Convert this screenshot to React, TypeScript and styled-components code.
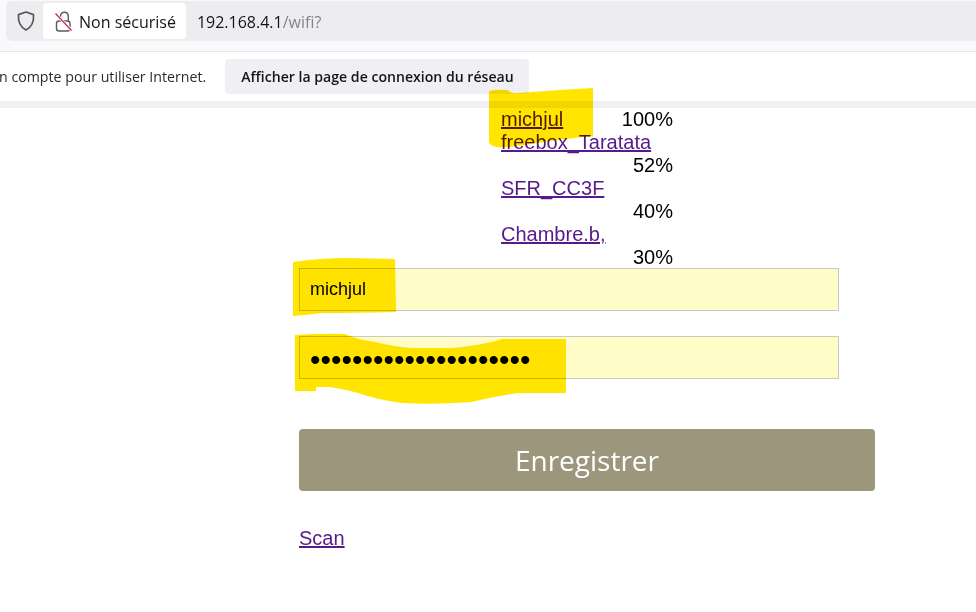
import React from "react";
import styled, { createGlobalStyle } from "styled-components";

const GlobalStyle = createGlobalStyle`
  html, body {
    margin: 0;
    padding: 0;
    height: 100%;
    overflow: hidden;
    background: #fff;
  }
`;

const Shell = styled.div`
  position: relative;
  width: 976px;
  height: 612px;
  overflow: hidden;
  background: #fff;
`;

const Toolbar = styled.div`
  box-sizing: border-box;
  height: 52px;
  padding: 1px 0 0 6px;
  background: #f9f9fb;
  border-bottom: 1px solid #e4e4e8;
`;

const UrlBar = styled.div`
  display: flex;
  align-items: center;
  height: 40px;
  padding-left: 10px;
  background: #ededf0;
  border-radius: 6px 0 0 6px;
  font-family: "Open Sans", "Noto Sans", sans-serif;
  font-size: 16px;
  color: #15141a;
`;

const ShieldIcon = styled.svg`
  width: 20px;
  height: 22px;
  flex: none;
`;

const SecurityChip = styled.div`
  display: flex;
  align-items: center;
  gap: 6px;
  height: 36px;
  margin-left: 7px;
  padding: 0 10px 0 10px;
  background: #fff;
  border-radius: 4px;
`;

const LockIcon = styled.svg`
  width: 20px;
  height: 22px;
  flex: none;
`;

const ChipLabel = styled.span`
  margin-top: 2px;
`;

const UrlText = styled.div`
  margin: 2px 0 0 11px;
`;

const UrlPath = styled.span`
  color: #85858c;
`;

const NoticeBar = styled.div`
  display: flex;
  align-items: center;
  box-sizing: border-box;
  height: 56px;
  padding-bottom: 1px;
  background: #fff;
  border-bottom: 7px solid #f0f0f3;
  font-family: "Open Sans", "Noto Sans", sans-serif;
  font-size: 14.2px;
  color: #2b2a33;
  white-space: nowrap;
`;

const NoticeText = styled.span`
  margin-left: -1px;
`;

const NoticeButton = styled.div`
  display: flex;
  align-items: center;
  height: 35px;
  margin-left: 19px;
  padding: 0 15px 0 16px;
  background: #f0f0f4;
  border-radius: 4px;
  font-size: 14.1px;
  font-weight: 600;
  color: #15141a;
`;

const Page = styled.main`
  width: 576px;
  margin-left: 299px;
  font-family: "Liberation Sans", Arial, sans-serif;
  font-size: 20px;
  line-height: 23px;
  color: #000;
`;

const NetworkList = styled.div`
  width: 172px;
  margin-left: 202px;
`;

const NetworkRow = styled.div``;

const NetworkLink = styled.a`
  color: #551a8b;
  text-decoration: underline;
`;

const Quality = styled.span`
  float: right;
  width: 64px;
  text-align: right;

  /* le dernier flottant pousse le formulaire */
  ${NetworkRow}:last-child & {
    margin-bottom: -1px;
  }
`;

const Field = styled.input`
  display: block;
  box-sizing: border-box;
  width: 540px;
  height: 43px;
  margin: 0 0 25px;
  padding: 0 10px;
  background: #fffcc8;
  border: 1px solid #c9c9c4;
  border-radius: 0;
  outline: none;
  font-family: "Liberation Sans", Arial, sans-serif;
  font-size: 18px;
  color: #000;

  &[type="password"] {
    padding-top: 4px;
    font-size: 30px;
    letter-spacing: 0;
  }
`;

const SaveButton = styled.button`
  display: block;
  width: 576px;
  height: 62px;
  margin-top: 50px;
  padding: 0;
  background: #9c967c;
  border: none;
  border-radius: 4px;
  font-family: "Open Sans", "Noto Sans", sans-serif;
  font-size: 28px;
  color: #fff;
`;

const ScanLine = styled.div`
  margin-top: 36px;
`;

const Highlights = styled.svg`
  position: absolute;
  left: 0;
  top: 0;
  width: 976px;
  height: 612px;
  pointer-events: none;
  mix-blend-mode: multiply;
`;

const networks = [
  { ssid: "michjul", quality: "100%" },
  { ssid: "freebox_Taratata", quality: "52%" },
  { ssid: "SFR_CC3F", quality: "40%" },
  { ssid: "Chambre.b,", quality: "30%" },
];

// surligneur jaune pose sur la capture
const marks = [
  "M489 91 Q498 89 508 90 Q511 94 518 93 Q555 90 593 88 L593 136 Q560 139 525 145 Q505 148 497 147 Q490 146 489 142 Z",
  "M293 262 Q320 258 350 258 L395 259 L396 312 Q350 313 322 313 Q305 315 293 316 Z",
  "M295 335 Q325 333 345 334 Q355 339 375 342 Q395 347 412 348 L452 348 Q485 345 502 339 L566 339 L566 393 L518 393 Q495 396 472 402 Q435 405 402 403 Q378 400 358 393 Q340 388 328 387 L316 387 L316 391 L295 391 Z",
];

export default function App() {
  return (
    <Shell>
      <GlobalStyle />
      <Toolbar>
        <UrlBar>
          <ShieldIcon viewBox="0 0 20 22">
            <path
              d="M10 2 L17.5 4.6 C18 11 16 16.8 10 20 C4 16.8 2 11 2.5 4.6 Z"
              fill="none"
              stroke="#55555c"
              strokeWidth="1.7"
              strokeLinejoin="round"
            />
          </ShieldIcon>
          <SecurityChip>
            <LockIcon viewBox="0 0 20 22">
              <path
                d="M7.5 11 V6.5 C7.5 3.8 9.2 2.2 11.4 2.2 C13.6 2.2 15.3 3.8 15.3 6.5 V11"
                fill="none"
                stroke="#5b5b66"
                strokeWidth="1.4"
              />
              <path
                d="M6 11 H14.5 C16 11 17 12 17 13.5 V18.5 C17 20 16 21 14.5 21 H6 C4.5 21 3.5 20 3.5 18.5 V13.5 C3.5 12 4.5 11 6 11 Z"
                fill="none"
                stroke="#5b5b66"
                strokeWidth="1.4"
              />
              <path d="M2.5 3.5 L18.5 20.5" stroke="#fff" strokeWidth="3" />
              <path d="M2.5 3.5 L18.5 20.5" stroke="#d7264f" strokeWidth="1.3" />
            </LockIcon>
            <ChipLabel>Non sécurisé</ChipLabel>
          </SecurityChip>
          <UrlText>
            192.168.4.1<UrlPath>/wifi?</UrlPath>
          </UrlText>
        </UrlBar>
      </Toolbar>
      <NoticeBar>
        <NoticeText>n compte pour utiliser Internet.</NoticeText>
        <NoticeButton>Afficher la page de connexion du réseau</NoticeButton>
      </NoticeBar>
      <Page>
        <NetworkList>
          {networks.map((n) => (
            <NetworkRow key={n.ssid}>
              <NetworkLink href="#p">{n.ssid}</NetworkLink>&nbsp;
              <Quality>{n.quality}</Quality>
            </NetworkRow>
          ))}
        </NetworkList>
        <form>
          <Field type="text" defaultValue="michjul" />
          <Field type="password" defaultValue="aaaaaaaaaaaaaaaaaaaaa" />
          <SaveButton type="button">Enregistrer</SaveButton>
        </form>
        <ScanLine>
          <NetworkLink href="#scan">Scan</NetworkLink>
        </ScanLine>
      </Page>
      <Highlights viewBox="0 0 976 612">
        {marks.map((d) => (
          <path key={d} d={d} fill="#ffe500" />
        ))}
      </Highlights>
    </Shell>
  );
}
